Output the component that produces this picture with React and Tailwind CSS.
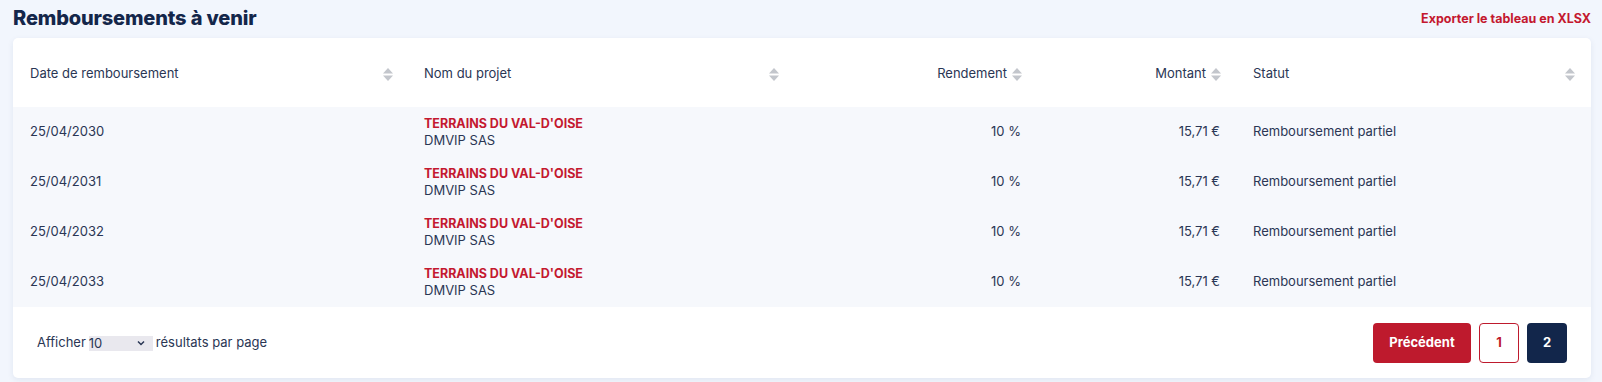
import React from "react";

const SortIcon = () => (
  <svg width="10" height="13" viewBox="0 0 10 13" className="shrink-0">
    <path d="M5 0 L10 5.5 L0 5.5 Z" fill="#c3c6cc" />
    <path d="M5 13 L10 7.5 L0 7.5 Z" fill="#c3c6cc" />
  </svg>
);

const rows = ["25/04/2030", "25/04/2031", "25/04/2032", "25/04/2033"];

export default function App() {
  return (
    <div
      className="w-[1602px] h-[382px] bg-[#f2f6fd] text-[#2a3654] overflow-hidden"
      style={{ fontFamily: "Inter, 'Liberation Sans', sans-serif" }}
    >
      <div className="flex items-end justify-between pl-[13px] pr-[11px] h-[34px] pb-[6px]">
        <h1 className="text-[20px] font-extrabold text-[#14264a] leading-none tracking-[-0.15px]">Remboursements à venir</h1>
        <a className="text-[12.5px] font-bold text-[#c4182f] leading-none mb-[3px]">Exporter le tableau en XLSX</a>
      </div>
      <div className="mx-[13px] mt-[4px] w-[1578px] h-[340px] bg-white rounded-[5px] shadow-[0_2px_6px_rgba(30,50,100,0.08)] overflow-hidden flex flex-col">
        <table className="w-full table-fixed border-collapse text-[13px]">
          <colgroup>
            <col className="w-[397px]" />
            <col className="w-[383px]" />
            <col className="w-[245px]" />
            <col className="w-[199px]" />
            <col className="w-[354px]" />
          </colgroup>
          <thead>
            <tr className="h-[69px]">
              <th className="px-[17px] pt-[3px] font-normal text-left">
                <div className="flex items-center justify-between">
                  <span>Date de remboursement</span>
                  <SortIcon />
                </div>
              </th>
              <th className="px-[14px] pt-[3px] font-normal text-left">
                <div className="flex items-center justify-between">
                  <span>Nom du projet</span>
                  <SortIcon />
                </div>
              </th>
              <th className="px-[16px] pt-[3px] font-normal">
                <div className="flex items-center justify-end gap-[5px]">
                  <span>Rendement</span>
                  <SortIcon />
                </div>
              </th>
              <th className="px-[16px] pt-[3px] font-normal">
                <div className="flex items-center justify-end gap-[5px]">
                  <span>Montant</span>
                  <SortIcon />
                </div>
              </th>
              <th className="px-[16px] pt-[3px] font-normal text-left">
                <div className="flex items-center justify-between">
                  <span>Statut</span>
                  <SortIcon />
                </div>
              </th>
            </tr>
          </thead>
          <tbody className="bg-[#f6f8fc]">
            {rows.map((d) => (
              <tr key={d} className="h-[50px]">
                <td className="px-[17px] pb-[1px]">{d}</td>
                <td className="px-[14px]">
                  <div className="font-bold text-[#c4182f] leading-[16px] text-[12.5px]">TERRAINS DU VAL-D'OISE</div>
                  <div className="leading-[16px]">DMVIP SAS</div>
                </td>
                <td className="px-[17px] pb-[1px] text-right">10 %</td>
                <td className="px-[17px] pb-[1px] text-right">15,71 €</td>
                <td className="px-[16px] pb-[1px]">Remboursement partiel</td>
              </tr>
            ))}
          </tbody>
        </table>
        <div className="flex-1 flex items-center justify-between pl-[24px] pr-[24px] pt-[1px]">
          <div className="flex items-center text-[13px]">
            <span>Afficher</span>
            <div className="ml-[3px] w-[64px] h-[15px] bg-[#e9e8ee] flex items-center justify-between pr-[8px]">
              <span className="leading-none">10</span>
              <svg width="8" height="6" viewBox="0 0 8 6">
                <path d="M1 1.5 L4 4.5 L7 1.5" stroke="#2a3654" strokeWidth="1.5" fill="none" />
              </svg>
            </div>
            <span className="ml-[3px]">résultats par page</span>
          </div>
          <div className="flex items-center gap-[8px]">
            <button className="w-[98px] h-[40px] rounded-[4px] bg-[#be1a2d] text-white text-[13px] font-bold">Précédent</button>
            <button className="w-[40px] h-[40px] rounded-[4px] bg-white border border-[#be1a2d] text-[#be1a2d] text-[13px] font-bold">1</button>
            <button className="w-[40px] h-[40px] rounded-[4px] bg-[#12264b] text-white text-[13px] font-bold">2</button>
          </div>
        </div>
      </div>
    </div>
  );
}
